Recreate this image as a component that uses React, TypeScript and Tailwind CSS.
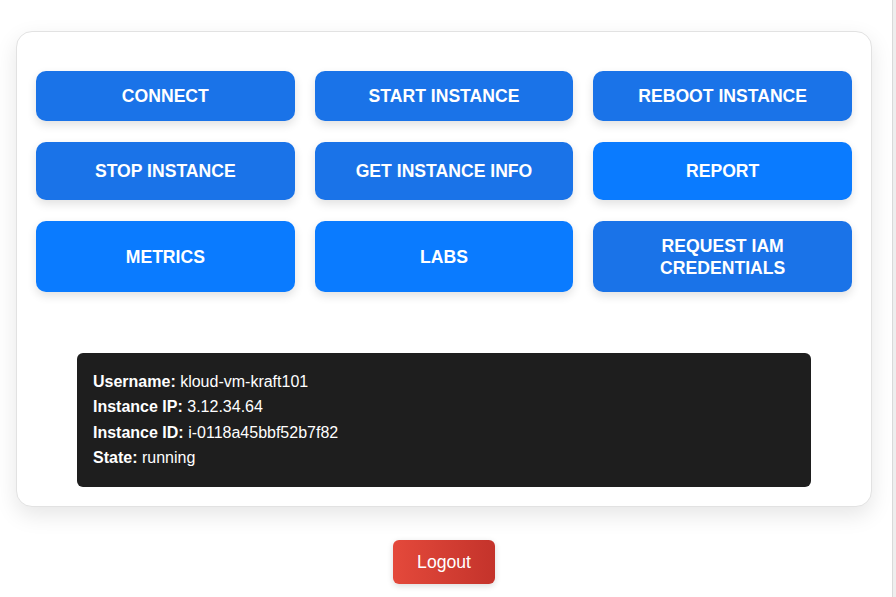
import type { FC } from 'react'

type Action = {
  label: string
  bright?: boolean
}

const rows: { height: string; items: Action[] }[] = [
  {
    height: 'h-[50px]',
    items: [{ label: 'Connect' }, { label: 'Start Instance' }, { label: 'Reboot Instance' }]
  },
  {
    height: 'h-[58px]',
    items: [{ label: 'Stop Instance' }, { label: 'Get Instance Info' }, { label: 'Report', bright: true }]
  },
  {
    height: 'h-[71px]',
    items: [
      { label: 'Metrics', bright: true },
      { label: 'Labs', bright: true },
      { label: 'Request IAM Credentials' }
    ]
  }
]

const info = [
  { key: 'Username', value: 'kloud-vm-kraft101' },
  { key: 'Instance IP', value: '3.12.34.64' },
  { key: 'Instance ID', value: 'i-0118a45bbf52b7f82' },
  { key: 'State', value: 'running' }
]

const ActionButton: FC<Action & { height: string }> = ({ label, bright, height }) => (
  <button
    className={`${height} w-full rounded-[10px] px-6 text-center text-[17.6px] font-bold uppercase leading-[22px] text-white shadow-[0_4px_10px_rgba(0,0,0,0.12)] ${
      bright ? 'bg-[#0a7bff]' : 'bg-[#1a73e8]'
    }`}
  >
    {label === 'Request IAM Credentials' ? (
      <>
        Request IAM
        <br />
        Credentials
      </>
    ) : (
      label
    )}
  </button>
)

export default function App() {
  return (
    <div className="flex min-h-[597px] w-full bg-white font-['Liberation_Sans',Arial,sans-serif]">
      <main className="flex-1 pt-[31px]">
        <section className="ml-[16px] w-[856px] rounded-[16px] border border-[#e2e2e2] bg-white px-[19px] pb-[19px] pt-[39px] shadow-[0_8px_22px_rgba(0,0,0,0.1)]">
          <div className="flex flex-col gap-[21px]">
            {rows.map((row, ix) => (
              <div key={ix} className="grid grid-cols-3 gap-[20px]">
                {row.items.map(item => (
                  <ActionButton key={item.label} {...item} height={row.height} />
                ))}
              </div>
            ))}
          </div>

          <div className="mx-auto mt-[61px] w-[734px] rounded-[6px] bg-[#1e1e1e] px-[16px] pb-[17px] pt-[16px] text-[16px] leading-[25.3px] text-white">
            {info.map(({ key, value }) => (
              <div key={key}>
                <strong className="font-bold">{key}:</strong> {value}
              </div>
            ))}
          </div>
        </section>

        <div className="mt-[33px] flex w-[888px] justify-center">
          <button className="h-[44px] w-[102px] rounded-[6px] bg-gradient-to-r from-[#e4493b] to-[#c4332b] text-[17.6px] text-white shadow-[0_2px_6px_rgba(0,0,0,0.15)]">
            Logout
          </button>
        </div>
      </main>
      <aside className="w-[4px] border-l border-[#d9d9d9] bg-[#eeeeee]" />
    </div>
  )
}
